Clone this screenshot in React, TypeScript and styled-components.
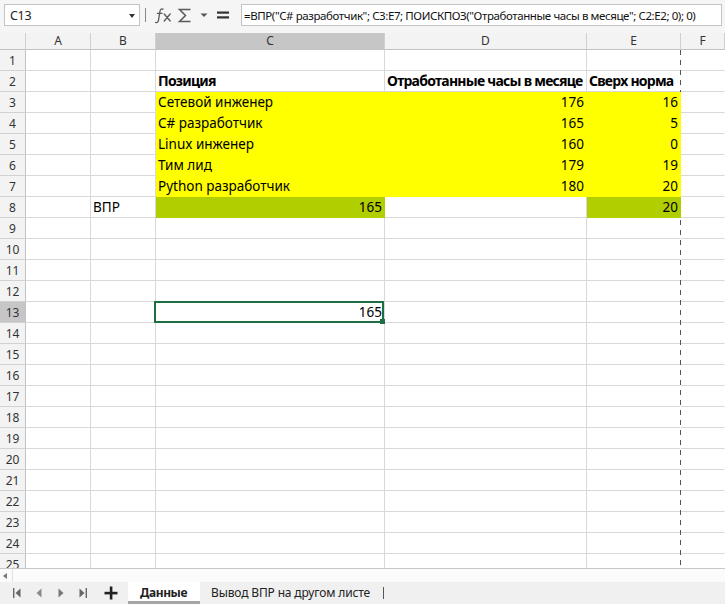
import React from 'react';
import styled, { createGlobalStyle, css } from 'styled-components';

const GlobalStyle = createGlobalStyle`
  html, body { margin: 0; padding: 0; background: #ffffff; }
  body { font-family: "Noto Sans", "DejaVu Sans", sans-serif; overflow: hidden; }
  * { box-sizing: border-box; }
`;

const FONT = `"Noto Sans", "DejaVu Sans", sans-serif`;
const GRID = '#d9d9d9';
const YELLOW = '#ffff00';
const GREEN = '#b1cf00';
const SEL = '#1e6e45';

const Frame = styled.div`
  width: 725px;
  height: 604px;
  display: flex;
  flex-direction: column;
  overflow: hidden;
  background: #ffffff;
`;

const Toolbar = styled.div`
  height: 33px;
  flex: 0 0 33px;
  display: flex;
  align-items: flex-start;
  padding: 4px 3px 0 4px;
  background: #f5f5f5;
`;

const NameBox = styled.div`
  width: 136px;
  height: 22px;
  background: #ffffff;
  border: 1px solid #c3c3c3;
  display: flex;
  align-items: center;
  justify-content: space-between;
  padding: 0 4px 0 5px;
  font-size: 12.5px;
  letter-spacing: -0.3px;
  color: #222;
`;

const Caret = styled.span`
  width: 0;
  height: 0;
  border-left: 3.5px solid transparent;
  border-right: 3.5px solid transparent;
  border-top: 4px solid #333;
  margin-top: 2px;
`;

const Divider = styled.span`
  width: 1px;
  height: 14px;
  background: #8a8a8a;
  margin: 4px 7px 0 5px;
`;

const ToolIcon = styled.span<{ $w: number }>`
  width: ${(p) => p.$w}px;
  height: 22px;
  display: flex;
  align-items: center;
  justify-content: center;
  color: #555;
`;

const FormulaInput = styled.div`
  flex: 1;
  height: 22px;
  margin-left: 8px;
  background: #ffffff;
  border: 1px solid #c3c3c3;
  display: flex;
  align-items: center;
  padding-left: 2px;
  font-size: 11.5px;
  letter-spacing: -0.4px;
  color: #111;
  white-space: nowrap;
  overflow: hidden;
`;

const Sheet = styled.div`
  position: relative;
  flex: 0 0 535px;
  height: 535px;
  overflow: hidden;
`;

const Grid = styled.div`
  display: grid;
  grid-template-columns: 26px 65px 65px 229px 202px 94px 1fr;
  grid-template-rows: 17px;
  grid-auto-rows: 21px;
`;

const HeadCell = styled.div<{ $active?: boolean; $corner?: boolean }>`
  background: ${(p) => (p.$active ? '#c6c6c6' : '#f3f3f3')};
  border-right: 1px solid #cfcfcf;
  border-bottom: 1px solid #c2c2c2;
  display: flex;
  align-items: center;
  justify-content: center;
  font-size: 12px;
  color: #333;
  line-height: 16px;
`;

const RowHead = styled.div<{ $active?: boolean }>`
  background: ${(p) => (p.$active ? '#c6c6c6' : '#f3f3f3')};
  border-right: 1px solid #c2c2c2;
  border-bottom: 1px solid #d2d2d2;
  display: flex;
  align-items: center;
  justify-content: center;
  font-size: 12px;
  color: #333;
  padding-top: 1px;
`;

const Cell = styled.div<{
  $fill?: string;
  $right?: boolean;
  $bold?: boolean;
  $edge?: boolean;
  $last?: boolean;
}>`
  position: ${(p) => (p.$fill ? 'relative' : 'static')};
  z-index: ${(p) => (p.$fill ? 1 : 'auto')};
  background: ${(p) => p.$fill || '#ffffff'};
  border-right: 1px solid ${(p) => (p.$fill ? p.$fill : p.$edge || p.$last ? 'transparent' : GRID)};
  border-bottom: 1px solid ${(p) => p.$fill || GRID};
  font-family: ${FONT};
  font-size: 13.5px;
  line-height: 20px;
  color: #000;
  padding: 0 2px;
  white-space: nowrap;
  overflow: visible;
  text-align: ${(p) => (p.$right ? 'right' : 'left')};
  ${(p) =>
    p.$bold &&
    css`
      font-size: 14px;
      font-weight: 700;
      letter-spacing: -0.75px;
    `}
`;

const Selection = styled.div`
  position: absolute;
  left: -2px;
  top: -1px;
  right: 0;
  bottom: -1px;
  border: 2px solid ${SEL};
  pointer-events: none;
  &::after {
    content: '';
    position: absolute;
    right: -3px;
    bottom: -3px;
    width: 5px;
    height: 5px;
    background: ${SEL};
  }
`;

const SelectedCell = styled(Cell)`
  position: relative;
  z-index: 2;
`;

const PageBreak = styled.div`
  position: absolute;
  left: 680px;
  top: 17px;
  bottom: 0;
  width: 1px;
  z-index: 0;
  background: repeating-linear-gradient(to bottom, #555 0 5px, transparent 5px 10px);
`;

const HScroll = styled.div`
  flex: 0 0 14px;
  height: 14px;
  border-top: 1px solid #c8c8c8;
  background: #fbfbfb;
  display: flex;
  align-items: center;
`;

const ScrollArrow = styled.span`
  width: 13px;
  height: 13px;
  border-right: 1px solid #e0e0e0;
  display: flex;
  align-items: center;
  justify-content: center;
  &::before {
    content: '';
    width: 0;
    height: 0;
    border-top: 3.5px solid transparent;
    border-bottom: 3.5px solid transparent;
    border-right: 4px solid #777;
    margin-left: -2px;
  }
`;

const TabBar = styled.div`
  flex: 0 0 22px;
  height: 22px;
  background: #f0f0f0;
  display: flex;
  align-items: stretch;
  padding-left: 6px;
`;

const NavButton = styled.span`
  width: 22px;
  display: flex;
  align-items: center;
  justify-content: center;
`;

const AddButton = styled.span`
  width: 26px;
  margin: 0 4px;
  display: flex;
  align-items: center;
  justify-content: center;
`;

const Tab = styled.div<{ $active?: boolean }>`
  display: flex;
  align-items: center;
  padding: ${(p) => (p.$active ? '0 13px 1px 12px' : '0 11px 1px 11px')};
  font-size: 12px;
  color: #222;
  background: ${(p) => (p.$active ? '#ffffff' : 'transparent')};
  font-weight: ${(p) => (p.$active ? 700 : 400)};
  letter-spacing: ${(p) => (p.$active ? '-0.4px' : '-0.15px')};
  box-shadow: ${(p) => (p.$active ? 'inset 0 -3px 0 #a5a5a5' : 'none')};
`;

const TabEnd = styled.span`
  width: 1px;
  height: 12px;
  align-self: center;
  background: #555;
  margin-left: 2px;
`;

type CellDef = { t: string; fill?: string; right?: boolean; bold?: boolean; sel?: boolean };

const data: Record<number, Record<string, CellDef>> = {
  2: {
    C: { t: 'Позиция', bold: true },
    D: { t: 'Отработанные часы в месяце', bold: true },
    E: { t: 'Сверх норма', bold: true },
  },
  3: {
    C: { t: 'Сетевой инженер', fill: YELLOW },
    D: { t: '176', fill: YELLOW, right: true },
    E: { t: '16', fill: YELLOW, right: true },
  },
  4: {
    C: { t: 'C# разработчик', fill: YELLOW },
    D: { t: '165', fill: YELLOW, right: true },
    E: { t: '5', fill: YELLOW, right: true },
  },
  5: {
    C: { t: 'Linux инженер', fill: YELLOW },
    D: { t: '160', fill: YELLOW, right: true },
    E: { t: '0', fill: YELLOW, right: true },
  },
  6: {
    C: { t: 'Тим лид', fill: YELLOW },
    D: { t: '179', fill: YELLOW, right: true },
    E: { t: '19', fill: YELLOW, right: true },
  },
  7: {
    C: { t: 'Python разработчик', fill: YELLOW },
    D: { t: '180', fill: YELLOW, right: true },
    E: { t: '20', fill: YELLOW, right: true },
  },
  8: {
    B: { t: 'ВПР' },
    C: { t: '165', fill: GREEN, right: true },
    E: { t: '20', fill: GREEN, right: true },
  },
  13: {
    C: { t: '165', right: true, sel: true },
  },
};

const COLS = ['A', 'B', 'C', 'D', 'E', 'F'];
const ROWS = Array.from({ length: 25 }, (_, i) => i + 1);

const FxIcon = () => (
  <svg width="20" height="18" viewBox="0 0 20 18">
    <path d="M9 3.2c-1.6-.6-2.7.2-3 1.9L4.4 14.6c-.3 1.6-1.3 2.3-2.8 1.8" fill="none" stroke="#5a5a5a" strokeWidth="1.3" strokeLinecap="round" />
    <path d="M3.4 7.3h4.6" fill="none" stroke="#5a5a5a" strokeWidth="1.2" strokeLinecap="round" />
    <path d="M10.2 8l6 7M16.2 8l-6 7" fill="none" stroke="#5a5a5a" strokeWidth="1.3" strokeLinecap="round" />
  </svg>
);

const SigmaIcon = () => (
  <svg width="16" height="18" viewBox="0 0 16 18">
    <path d="M13.5 3.5H2.5L8.5 9.5 2.5 15.5h11" fill="none" stroke="#5a5a5a" strokeWidth="1.5" strokeLinejoin="miter" />
  </svg>
);

const SmallCaret = () => (
  <svg width="8" height="6" viewBox="0 0 8 6">
    <path d="M0.5 1.5h7L4 5z" fill="#555" />
  </svg>
);

const EqualsIcon = () => (
  <svg width="14" height="12" viewBox="0 0 14 12">
    <rect x="1" y="2.5" width="12" height="2.2" fill="#333" />
    <rect x="1" y="7.3" width="12" height="2.2" fill="#333" />
  </svg>
);

const FirstIcon = () => (
  <svg width="10" height="12" viewBox="0 0 10 12">
    <rect x="1" y="1" width="1.4" height="10" fill="#666" />
    <path d="M8.5 1.5v9L3.5 6z" fill="#666" />
  </svg>
);
const PrevIcon = () => (
  <svg width="8" height="12" viewBox="0 0 8 12">
    <path d="M6.5 1.5v9L1.5 6z" fill="#8a8a8a" />
  </svg>
);
const NextIcon = () => (
  <svg width="8" height="12" viewBox="0 0 8 12">
    <path d="M1.5 1.5v9l5-4.5z" fill="#777" />
  </svg>
);
const LastIcon = () => (
  <svg width="10" height="12" viewBox="0 0 10 12">
    <path d="M1.5 1.5v9l5-4.5z" fill="#666" />
    <rect x="7.6" y="1" width="1.4" height="10" fill="#666" />
  </svg>
);
const PlusIcon = () => (
  <svg width="14" height="14" viewBox="0 0 14 14">
    <rect x="5.8" y="0.5" width="2.6" height="13" fill="#222" />
    <rect x="0.5" y="5.8" width="13" height="2.6" fill="#222" />
  </svg>
);

export default function App() {
  return (
    <>
      <GlobalStyle />
      <Frame>
        <Toolbar>
          <NameBox>
            <span>C13</span>
            <Caret />
          </NameBox>
          <Divider />
          <ToolIcon $w={22}>
            <FxIcon />
          </ToolIcon>
          <ToolIcon $w={20}>
            <SigmaIcon />
          </ToolIcon>
          <ToolIcon $w={18}>
            <SmallCaret />
          </ToolIcon>
          <ToolIcon $w={20}>
            <EqualsIcon />
          </ToolIcon>
          <FormulaInput>
            =ВПР("C# разработчик"; C3:E7; ПОИСКПОЗ("Отработанные часы в месяце"; C2:E2; 0); 0)
          </FormulaInput>
        </Toolbar>
        <Sheet>
          <Grid>
            <HeadCell $corner />
            {COLS.map((c) => (
              <HeadCell key={c} $active={c === 'C'}>
                {c}
              </HeadCell>
            ))}
            {ROWS.map((r) => (
              <React.Fragment key={r}>
                <RowHead $active={r === 13}>{r}</RowHead>
                {COLS.map((c) => {
                  const d = data[r]?.[c];
                  if (d?.sel) {
                    return (
                      <SelectedCell key={c} $right={d.right}>
                        {d.t}
                        <Selection />
                      </SelectedCell>
                    );
                  }
                  return (
                    <Cell
                      key={c}
                      $fill={d?.fill}
                      $right={d?.right}
                      $bold={d?.bold}
                      $edge={c === 'E'}
                      $last={c === 'F'}
                    >
                      {d?.t ?? ''}
                    </Cell>
                  );
                })}
              </React.Fragment>
            ))}
          </Grid>
          <PageBreak />
        </Sheet>
        <HScroll>
          <ScrollArrow />
        </HScroll>
        <TabBar>
          <NavButton>
            <FirstIcon />
          </NavButton>
          <NavButton>
            <PrevIcon />
          </NavButton>
          <NavButton>
            <NextIcon />
          </NavButton>
          <NavButton>
            <LastIcon />
          </NavButton>
          <AddButton>
            <PlusIcon />
          </AddButton>
          <Tab $active>Данные</Tab>
          <Tab>Вывод ВПР на другом листе</Tab>
          <TabEnd />
        </TabBar>
      </Frame>
    </>
  );
}
